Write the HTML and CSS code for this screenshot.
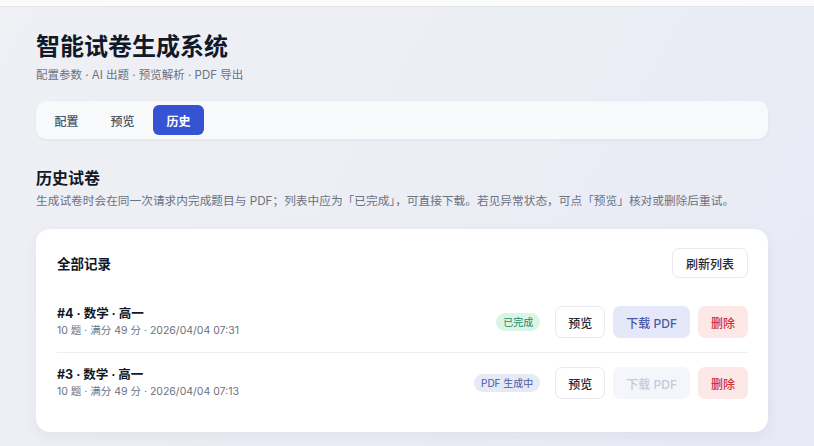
FILE: index.html
```html
<!DOCTYPE html>
<html lang="zh-CN">
<head>
<meta charset="utf-8">
<title>智能试卷生成系统</title>
<link rel="stylesheet" href="styles.css">
</head>
<body>
<div class="topstrip"></div>
<main class="page">
  <header class="hero">
    <h1 class="title">智能试卷生成系统</h1>
    <p class="subtitle">配置参数 · AI 出题 · 预览解析 · PDF 导出</p>
  </header>
  <nav class="tabs">
    <button class="tab">配置</button>
    <button class="tab">预览</button>
    <button class="tab active">历史</button>
  </nav>
  <section class="history">
    <h2 class="section-title">历史试卷</h2>
    <p class="section-desc">生成试卷时会在同一次请求内完成题目与 PDF；列表中应为「已完成」，可直接下载。若见异常状态，可点「预览」核对或删除后重试。</p>
    <div class="card">
      <div class="card-head">
        <span class="card-title">全部记录</span>
        <button class="btn btn-plain">刷新列表</button>
      </div>
      <div class="row">
        <div class="info">
          <div class="row-title">#4 · 数学 · 高一</div>
          <div class="row-meta">10 题 · 满分 49 分 · 2026/04/04 07:31</div>
        </div>
        <div class="actions">
          <span class="badge badge-done">已完成</span>
          <button class="btn btn-plain">预览</button>
          <button class="btn btn-dl">下载 PDF</button>
          <button class="btn btn-del">删除</button>
        </div>
      </div>
      <div class="row">
        <div class="info">
          <div class="row-title">#3 · 数学 · 高一</div>
          <div class="row-meta">10 题 · 满分 49 分 · 2026/04/04 07:13</div>
        </div>
        <div class="actions">
          <span class="badge badge-pending">PDF 生成中</span>
          <button class="btn btn-plain">预览</button>
          <button class="btn btn-dl disabled">下载 PDF</button>
          <button class="btn btn-del">删除</button>
        </div>
      </div>
    </div>
  </section>
</main>
</body>
</html>
```

FILE: styles.css
```css
* { box-sizing: border-box; }
html, body { margin: 0; padding: 0; }
body {
  width: 814px;
  height: 446px;
  overflow: hidden;
  font-family: Inter, "Noto Sans CJK SC", "Noto Sans", sans-serif;
  color: #111827;
  background: linear-gradient(120deg, #eff0f4 0%, #eceef5 50%, #e7eaf5 100%);
}
.topstrip {
  height: 7px;
  background: #fbfbfc;
  border-bottom: 1px solid #e4e6ec;
}
.page {
  padding: 23px 46px 0 36px;
}
.title {
  margin: 0;
  font-size: 24px;
  line-height: 34px;
  font-weight: 700;
  color: #111827;
}
.subtitle {
  margin: 2px 0 0;
  font-size: 11.5px;
  line-height: 18px;
  color: #6b7280;
}
.tabs {
  margin-top: 17px;
  height: 38px;
  padding: 4px 5px;
  display: flex;
  gap: 5px;
  background: #f8f9fb;
  border-radius: 10px;
  box-shadow: 0 1px 3px rgba(30, 41, 80, 0.06);
}
.tab {
  height: 30px;
  width: 51px;
  border: 0;
  border-radius: 6px;
  background: transparent;
  font-family: inherit;
  font-size: 12px;
  font-weight: 500;
  color: #4b5563;
  padding: 0;
}
.tab.active {
  background: #3553d3;
  color: #ffffff;
  font-weight: 700;
}
.section-title {
  margin: 28px 0 0;
  font-size: 16px;
  line-height: 22px;
  font-weight: 700;
  color: #111827;
}
.section-desc {
  margin: 3px 0 0;
  font-size: 11.7px;
  line-height: 18px;
  color: #6b7280;
}
.card {
  margin-top: 19px;
  background: #ffffff;
  border-radius: 14px;
  padding: 19px 20px 19px 21px;
  box-shadow: 0 4px 14px rgba(30, 41, 80, 0.06);
}
.card-head {
  display: flex;
  align-items: center;
  justify-content: space-between;
  height: 30px;
  margin-bottom: 14px;
}
.card-title {
  font-size: 13.5px;
  font-weight: 700;
  color: #111827;
}
.btn {
  height: 32px;
  padding: 0 12px;
  border-radius: 7px;
  border: 1px solid transparent;
  font-family: inherit;
  font-size: 12px;
  font-weight: 500;
  background: #fff;
  color: #111827;
}
.card-head .btn { height: 30px; padding: 0 13px; }
.btn-plain {
  border-color: #e7e9ee;
  background: #ffffff;
  color: #1f2937;
}
.btn-dl {
  background: #e4e8f8;
  color: #4a5aa8;
}
.btn-dl.disabled {
  background: #f4f6fc;
  color: #c4cadb;
}
.btn-del {
  background: #fde8e8;
  color: #d23030;
}
.row {
  display: flex;
  align-items: center;
  justify-content: space-between;
  padding: 13px 0;
  border-bottom: 1px solid #eceef2;
}
.row:last-child { border-bottom: 0; }
.row-title {
  font-size: 12.5px;
  line-height: 18px;
  font-weight: 700;
  color: #111827;
}
.row-meta {
  font-size: 10.5px;
  line-height: 16px;
  color: #6b7280;
}
.actions {
  display: flex;
  align-items: center;
  gap: 8px;
}
.badge {
  height: 18px;
  line-height: 18px;
  padding: 0 7px;
  border-radius: 9px;
  font-size: 10px;
  margin-right: 7px;
}
.badge-done {
  background: #d8f5e7;
  color: #1f8a5c;
}
.badge-pending {
  background: #e6eaf5;
  color: #4a5a9f;
}
```
